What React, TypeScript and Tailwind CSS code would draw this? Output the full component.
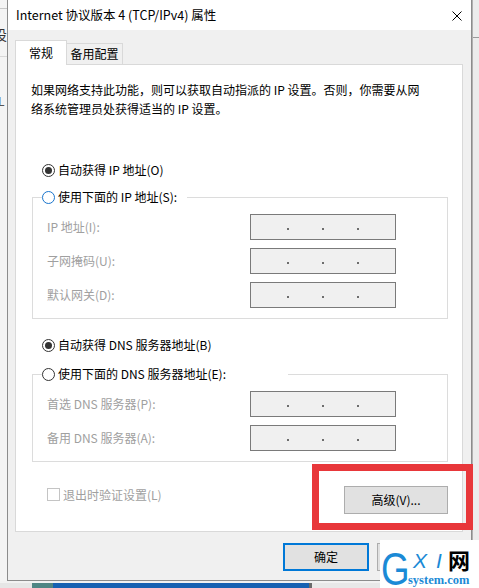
import React from "react";

function Radio({ checked, blue }: { checked?: boolean; blue?: boolean }) {
  return (
    <span
      className={
        blue
          ? "w-[13px] h-[13px] shrink-0 rounded-full border border-[#1874cd] bg-white flex items-center justify-center"
          : "w-[13px] h-[13px] shrink-0 rounded-full border border-[#333333] bg-white flex items-center justify-center"
      }
    >
      {checked && <span className="w-[7px] h-[7px] rounded-full bg-[#333333]" />}
    </span>
  );
}

function IpBox() {
  return (
    <div className="w-[146px] h-[26px] border border-[#7a7a7a] bg-[#f0f0f0] flex items-center pl-[36px] gap-[33px] pt-[4px]">
      <span className="w-[2px] h-[2px] bg-[#6d6d6d]" />
      <span className="w-[2px] h-[2px] bg-[#6d6d6d]" />
      <span className="w-[2px] h-[2px] bg-[#6d6d6d]" />
    </div>
  );
}

function FieldRow({ label }: { label: string }) {
  return (
    <div className="flex items-center">
      <span className="ml-[14px] w-[203px] text-[#a0a0a0]">{label}</span>
      <IpBox />
    </div>
  );
}

function Group({
  legend,
  legendWidth,
  labels,
}: {
  legend: string;
  legendWidth: string;
  labels: string[];
}) {
  return (
    <div className="relative ml-[16px] w-[416px] border border-[#dcdcdc] pt-[16px] pb-[10px] flex flex-col gap-[8px]">
      <div className={`absolute left-[9px] top-[-11px] h-[20px] bg-white flex items-center gap-[3px] ${legendWidth}`}>
        <Radio blue={legend.includes("IP")} />
        <span>{legend}</span>
      </div>
      {labels.map((l) => (
        <FieldRow key={l} label={l} />
      ))}
    </div>
  );
}

export default function App() {
  return (
    <div className="w-[479px] h-[588px] overflow-hidden relative bg-[#f2f2f2] flex flex-col text-[12px] text-black font-['Noto_Sans_CJK_SC',sans-serif]">
      <div className="flex h-[581px]">
        {/* left desktop gutter */}
        <div className="w-[7px] shrink-0 overflow-hidden flex flex-col bg-[#f4f4f4]">
          <div className="mt-[8px] h-[1px] bg-[#c8c8c8]" />
          <div className="mt-[17px] h-[16px] leading-[16px] text-[14px] -ml-[7px] text-[#333]">设</div>
          <div className="mt-[14px] h-[1px] bg-[#d8d8d8]" />
          <div className="mt-[37px] h-[14px] leading-[14px] text-[12px] -ml-[2px] text-[#555]">L</div>
        </div>

        {/* dialog */}
        <div className="w-[465px] shrink-0 flex flex-col border-x border-b border-[#8c8c8c]">
          <div className="h-[30px] shrink-0 bg-white flex items-center justify-between pl-[8px] pr-[9px]">
            <span className="leading-[16px] text-[12.5px]">Internet 协议版本 4 (TCP/IPv4) 属性</span>
            <svg width="10" height="10" viewBox="0 0 10 10" className="mt-[1px]">
              <path d="M0.5 0.5 L9.5 9.5 M9.5 0.5 L0.5 9.5" stroke="#000" strokeWidth="1" fill="none" />
            </svg>
          </div>

          <div className="flex-1 bg-[#f0f0f0] pl-[7px] pr-[8px] pt-[10px] flex flex-col">
            {/* tabs */}
            <div className="flex items-end h-[24px]">
              <div className="relative z-10 -mb-[1px] w-[52px] h-[25px] bg-white border-t border-x border-[#d9d9d9] flex items-center justify-center pb-[1px]">
                常规
              </div>
              <div className="w-[56px] h-[21px] bg-[#f0f0f0] border-t border-r border-[#d9d9d9] flex items-center justify-center">
                备用配置
              </div>
            </div>

            {/* panel */}
            <div className="w-[448px] h-[468px] bg-white border border-[#d9d9d9] flex flex-col">
              <p className="ml-[15px] mt-[15px] leading-[19px] whitespace-nowrap">
                如果网络支持此功能，则可以获取自动指派的 IP 设置。否则，你需要从网
                <br />
                络系统管理员处获得适当的 IP 设置。
              </p>

              <div className="ml-[26px] mt-[42px] h-[20px] flex items-center gap-[3px]">
                <Radio checked />
                <span>自动获得 IP 地址(O)</span>
              </div>

              <div className="mt-[17px]">
                <Group
                  legend="使用下面的 IP 地址(S):"
                  legendWidth="w-[145px]"
                  labels={["IP 地址(I):", "子网掩码(U):", "默认网关(D):"]}
                />
              </div>

              <div className="ml-[26px] mt-[16px] h-[20px] flex items-center gap-[3px]">
                <Radio checked />
                <span>自动获得 DNS 服务器地址(B)</span>
              </div>

              <div className="mt-[19px]">
                <Group
                  legend="使用下面的 DNS 服务器地址(E):"
                  legendWidth="w-[246px]"
                  labels={["首选 DNS 服务器(P):", "备用 DNS 服务器(A):"]}
                />
              </div>

              <div className="mt-[24px] flex items-start justify-between">
                <div className="ml-[31px] mt-[2px] flex items-center gap-[3px] h-[13px]">
                  <span className="w-[13px] h-[13px] border border-[#c4c4c4] bg-white" />
                  <span className="text-[#a0a0a0]">退出时验证设置(L)</span>
                </div>
                <div className="mr-[14px] w-[104px] h-[28px] bg-[#e1e1e1] border border-[#adadad] flex items-center justify-center">
                  高级(V)...
                </div>
              </div>
            </div>

            {/* bottom buttons */}
            <div className="mt-[11px] flex gap-[8px] ml-[268px]">
              <div className="w-[87px] h-[28px] bg-[#e1e1e1] border-2 border-[#0078d7] flex items-center justify-center">
                确定
              </div>
              <div className="w-[87px] h-[28px] bg-[#e1e1e1] border border-[#adadad] flex items-center justify-center">
                取消
              </div>
            </div>
          </div>
        </div>

        {/* right desktop gutter */}
        <div className="flex-1 flex flex-col bg-[#ececec] border-l border-[#b0b0b0]">
          <div className="mt-[37px] h-[1px] bg-[#9a9a9a]" />
        </div>
      </div>

      {/* bottom desktop strip */}
      <div className="h-[7px] flex flex-col">
        <div className="h-[2px] bg-[#f2f2f2]" />
        <div className="flex-1 flex">
          <div className="w-[32px] bg-[#e6e6e6]" />
          <div className="w-[21px] bg-[#4f8584]" />
          <div className="w-[256px] bg-[#1761b2]" />
          <div className="w-[3px] bg-[#6a6a6a]" />
          <div className="flex-1 bg-[#e8e8e8]" />
        </div>
      </div>

      {/* red annotation rectangle */}
      <div className="absolute left-[312px] top-[464px] w-[161px] h-[66px] border-[7px] border-[#e8373a]" />

      {/* watermark logo */}
      <div className="absolute left-[380px] top-[540px] w-[99px] h-[48px] bg-white overflow-hidden">
        <span className="absolute block left-[1px] top-[5px] text-[47px] leading-[47px] text-[#1b8ad6] font-['Liberation_Sans',sans-serif] scale-x-[0.78] origin-left">
          G
        </span>
        <span className="absolute block left-[33px] top-[10px] text-[21px] leading-[21px] italic text-[#1b8ad6] font-['Liberation_Sans',sans-serif]">
          X
        </span>
        <span className="absolute block left-[56px] top-[10px] text-[21px] leading-[21px] italic text-[#1b8ad6] font-['Liberation_Sans',sans-serif]">
          I
        </span>
        <span className="absolute block left-[68px] top-[7px] text-[22px] leading-[24px] font-bold text-black">
          网
        </span>
        <span className="absolute block left-[28px] top-[33px] text-[12.5px] leading-[14px] font-bold text-[#1b8ad6] font-['Liberation_Serif',serif]">
          system.com
        </span>
      </div>
    </div>
  );
}
